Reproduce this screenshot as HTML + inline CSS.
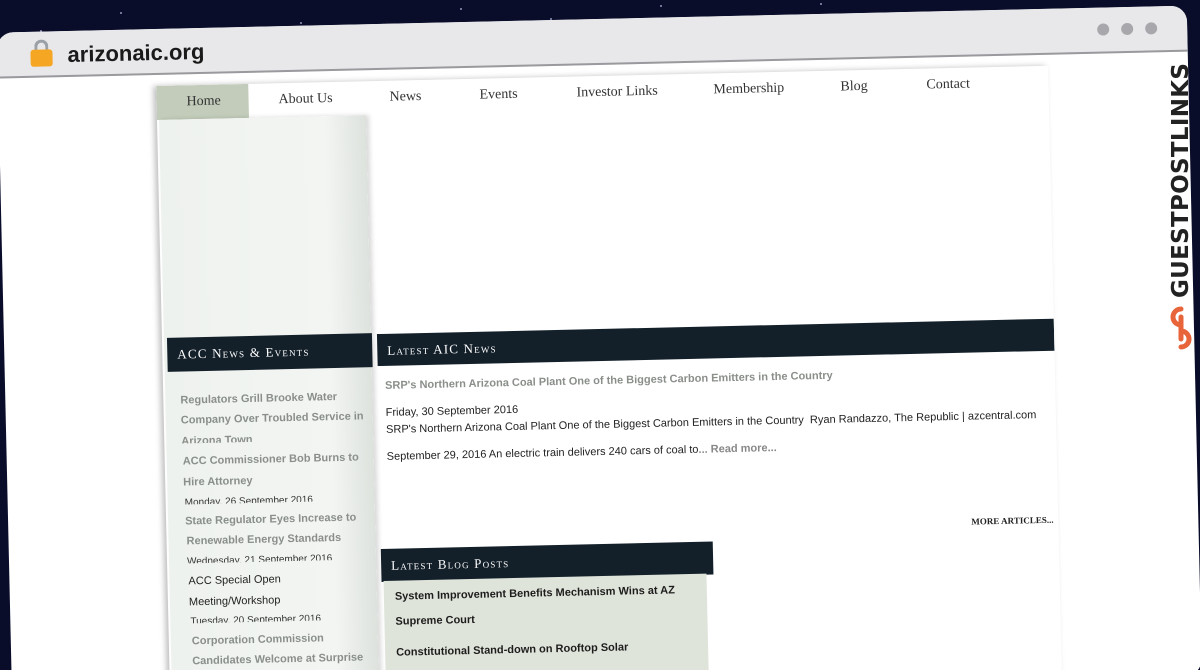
<!DOCTYPE html>
<html style="overflow:hidden;width:1200px;height:670px"><head><meta charset="utf-8"><style>
*{margin:0;padding:0;box-sizing:border-box}
body{width:1200px;height:670px;overflow:hidden;background:#0a0d2a;position:relative;font-family:"Liberation Sans",sans-serif}
.star{position:absolute;width:2px;height:2px;background:#cfd3ff;border-radius:50%;opacity:.7}
#w{position:absolute;left:0;top:0;width:1200px;height:670px;transform:rotate(-1.3deg);transform-origin:600px 335px}
.frame{position:absolute;left:4px;top:19px;width:1190px;height:670px;background:#fff;border-radius:16px;overflow:hidden}
.bar{position:absolute;left:0;top:0;width:100%;height:46px;background:#e8e8eb;border-bottom:2px solid #9a9a9e}
.lock{position:absolute;left:33px;top:18px;width:22px;height:17px;background:#f5a623;border-radius:3px}
.shack{position:absolute;left:37px;top:8px;width:14px;height:14px;border:3px solid #9aa0a8;border-bottom:none;border-radius:8px 8px 0 0}
.url{position:absolute;left:70px;top:11px;font-size:22px;font-weight:bold;color:#1a1a1a}
.dot{position:absolute;top:16px;width:12px;height:12px;border-radius:50%;background:#a8a8ac}
.page{position:absolute;left:158px;top:57px;width:892px;height:620px;background:#fff;box-shadow:-3px 0 6px rgba(0,0,0,.25);overflow:hidden}
.nav{position:absolute;left:0;top:0;height:34px;width:100%;font-family:"Liberation Serif",serif;font-size:14px;color:#333}
.nav span{position:absolute;top:9px}
.home{position:absolute;left:0;top:0;width:92px;height:34px;background:#c3ccba}
.lc{position:absolute;left:2px;top:34px;width:207px;height:620px;background:linear-gradient(90deg,#eef2ee,#f3f5f3 80%,#dde2dd);box-shadow:3px 0 5px rgba(0,0,0,.15)}
.db{position:absolute;background:#13202a;color:#fff;font-family:"Liberation Serif",serif;font-variant:small-caps;letter-spacing:1.2px;font-size:13px;padding:9px 10px}
.t{position:absolute;font-size:11px;white-space:nowrap;line-height:13px}
.g{color:#8a8f8a;font-weight:bold}
.k{color:#222}
.clip{height:8px;overflow:hidden;font-size:10px;color:#333}
.blog{position:absolute;left:216px;top:500px;width:323px;height:200px;background:#dfe4da}
.b{position:absolute;font-size:11px;font-weight:bold;color:#1d1d1d;white-space:nowrap}
</style></head><body>
<div class="star" style="left:120px;top:12px"></div><div class="star" style="left:300px;top:22px"></div><div class="star" style="left:460px;top:8px"></div><div class="star" style="left:660px;top:5px"></div><div class="star" style="left:820px;top:3px"></div><div class="star" style="left:250px;top:28px"></div><div class="star" style="left:550px;top:18px"></div><div class="star" style="left:40px;top:30px"></div>
<div id="w">
<div class="frame">
 <div class="bar">
  <div class="shack"></div><div class="lock"></div>
  <div class="url">arizonaic.org</div>
  <div class="dot" style="left:1100px"></div><div class="dot" style="left:1124px"></div><div class="dot" style="left:1148px"></div>
 </div>
 <div class="page">
  <div class="nav"><div class="home"></div>
   <span style="left:30px">Home</span><span style="left:122px">About Us</span><span style="left:233px">News</span><span style="left:323px">Events</span><span style="left:420px">Investor Links</span><span style="left:557px">Membership</span><span style="left:684px">Blog</span><span style="left:770px">Contact</span>
  </div>
  <div class="lc"></div>
  <div class="db" style="left:5px;top:252px;width:205px;height:34px">ACC News &amp; Events</div>
  <div class="db" style="left:215px;top:253px;width:677px;height:32px">Latest AIC News</div>
  <div class="t g" style="left:17px;top:309px">Regulators Grill Brooke Water</div>
  <div class="t g" style="left:17px;top:329px">Company Over Troubled Service in</div>
  <div class="t g" style="left:17px;top:350px;height:8px;overflow:hidden">Arizona Town</div>
  <div class="t g" style="left:18px;top:370px">ACC Commissioner Bob Burns to</div>
  <div class="t g" style="left:18px;top:391px">Hire Attorney</div>
  <div class="t clip" style="left:19px;top:411px">Monday, 26 September 2016</div>
  <div class="t g" style="left:19px;top:430px">State Regulator Eyes Increase to</div>
  <div class="t g" style="left:20px;top:450px">Renewable Energy Standards</div>
  <div class="t clip" style="left:20px;top:470px">Wednesday, 21 September 2016</div>
  <div class="t k" style="left:21px;top:490px">ACC Special Open</div>
  <div class="t k" style="left:21px;top:511px">Meeting/Workshop</div>
  <div class="t clip" style="left:22px;top:530px">Tuesday, 20 September 2016</div>
  <div class="t g" style="left:23px;top:550px">Corporation Commission</div>
  <div class="t g" style="left:23px;top:570px">Candidates Welcome at Surprise</div>
  <div class="t g" style="left:222px;top:299px">SRP's Northern Arizona Coal Plant One of the Biggest Carbon Emitters in the Country</div>
  <div class="t k" style="left:222px;top:326px">Friday, 30 September 2016</div>
  <div class="t k" style="left:222px;top:336px;line-height:27px">SRP's Northern Arizona Coal Plant One of the Biggest Carbon Emitters in the Country&nbsp; Ryan Randazzo, The Republic | azcentral.com<br>September 29, 2016 An electric train delivers 240 cars of coal to... <span style="color:#888;font-weight:bold">Read more...</span></div>
  <div class="t" style="left:805px;top:448px;font-family:'Liberation Serif',serif;font-size:9px;font-weight:bold;color:#222">MORE ARTICLES...</div>
  <div class="db" style="left:214px;top:468px;width:332px;height:33px">Latest Blog Posts</div>
  <div class="blog"></div>
  <div class="b" style="left:227px;top:510px">System Improvement Benefits Mechanism Wins at AZ</div>
  <div class="b" style="left:227px;top:535px">Supreme Court</div>
  <div class="b" style="left:227px;top:566px">Constitutional Stand-down on Rooftop Solar</div>
 </div>
</div>
</div>
<div style="position:absolute;left:1168px;top:298px;transform:rotate(-90deg);transform-origin:0 0;font-family:'DejaVu Sans',sans-serif;font-weight:bold;font-size:23px;color:#222;letter-spacing:.3px;white-space:nowrap">GUESTPOSTLINKS</div>
<svg style="position:absolute;left:1168px;top:304px" width="26" height="48" viewBox="0 0 26 48"><g fill="none" stroke="#e8643a" stroke-width="5" stroke-linecap="round"><path d="M13 5a8 8 0 1 0 0 16"/><path d="M13 43a8 8 0 1 0 0-16"/><path d="M13 13v22"/></g></svg>
</body></html>
